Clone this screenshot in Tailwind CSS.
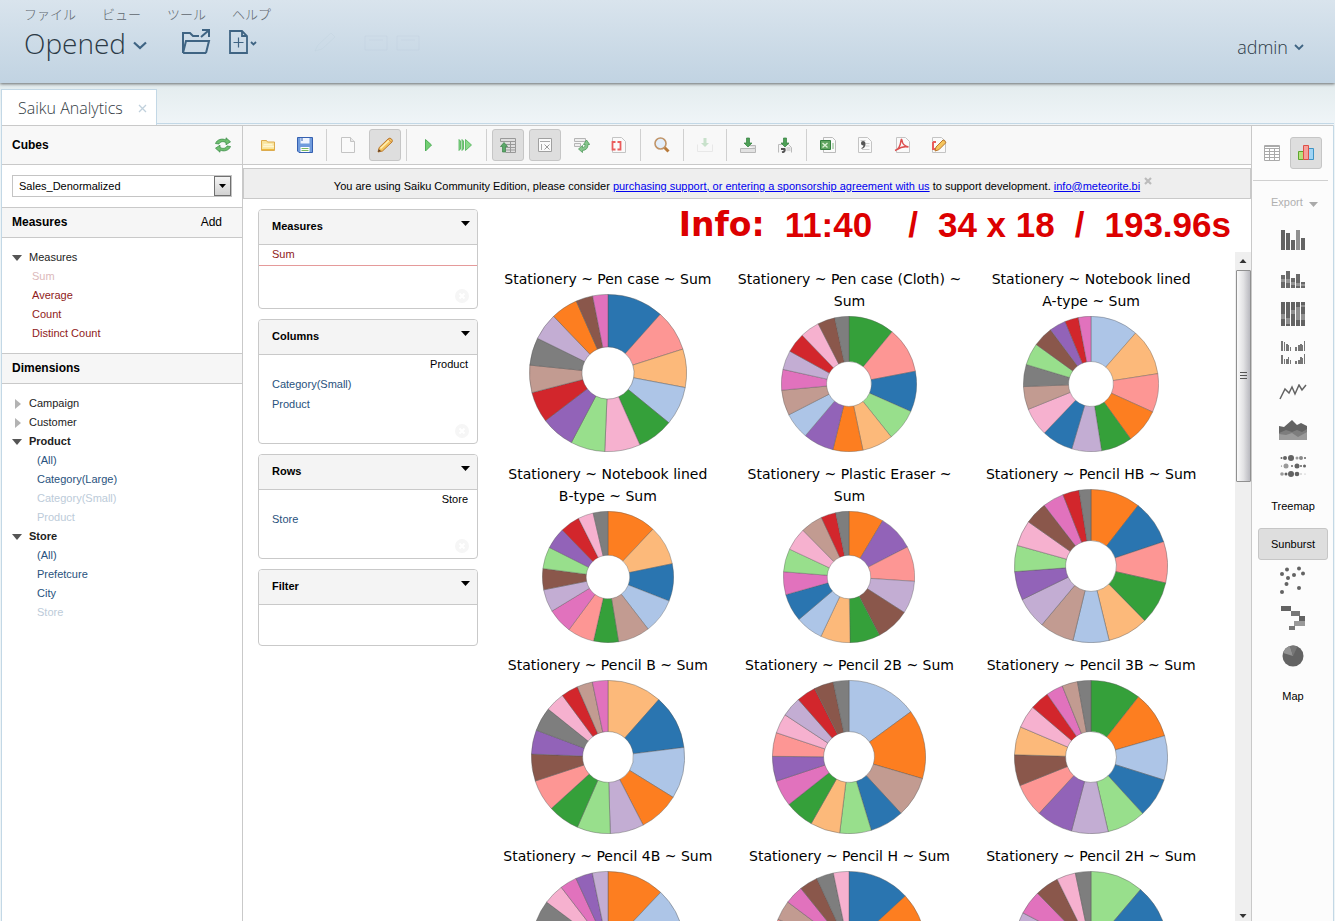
<!DOCTYPE html>
<html lang="ja">
<head>
<meta charset="utf-8">
<title>Saiku Analytics</title>
<script src="https://cdn.jsdelivr.net/npm/@tailwindcss/browser@4"></script>
</head>
<body class="flex h-screen flex-col overflow-hidden bg-[#eef4f6] font-['Liberation_Sans',Arial,sans-serif] text-[11px] leading-[19px] text-black">

<!-- Application header -->
<header class="relative z-10 flex h-[83px] shrink-0 justify-between bg-linear-to-b from-[#d9e4ed] to-[#c1d3e2] px-6 shadow-[0_1px_3px_rgba(0,0,0,0.55)]">
  <div class="flex flex-col">
    <nav class="flex h-[26px] items-center gap-[26px] font-['Noto_Sans_CJK_JP',sans-serif] text-[13px] font-light text-[#5f676e]">
      <a href="#">ファイル</a><a href="#">ビュー</a><a href="#">ツール</a><a href="#">ヘルプ</a>
    </nav>
    <div class="flex h-[34px] items-center">
      <button class="flex items-center gap-[7px] font-['Open_Sans',sans-serif] text-[28px] leading-8 font-light text-[#2c3a46]">Opened
        <svg class="mt-1 h-[9px] w-[14px]" viewBox="0 0 14 9" fill="none" stroke="#3f6483" stroke-width="2.2"><path d="M1 1.5l6 5.500 6-5.500"/></svg>
      </button>
      <button aria-label="Open" class="mb-1 ml-[34px]"><svg class="h-[27px] w-[30px]" viewBox="0 0 30 27" fill="none" stroke="#3f6483" stroke-width="2"><path d="M2 25V5h7l3 3h6M2 25h23M2 25l3-12h23l-3 12M20 9l7-6M21 2h7v7"/></svg></button>
      <button aria-label="New" class="mb-[2px] ml-[18px]"><svg class="h-[24px] w-[28px]" viewBox="0 0 28 24" fill="none" stroke="#3f6483" stroke-width="1.800"><path d="M1 1h12l5 5v17H1zM13 1v5h5"/><path d="M9.500 7.500v10M4.500 12.500h10" stroke-width="1.200"/><path d="M22 12l2.500 2.500L27 12"/></svg></button>
      <svg class="ml-14 h-[22px] w-[110px]" viewBox="0 0 110 22" fill="none" stroke="#b9cbd9" stroke-opacity=".25"><path d="M2 19l3-6L18 1l4 4L9 17zM52 4h22v14H52zM56 8h14M84 4h22v14H84zM88 8h14"/></svg>
    </div>
  </div>
  <button class="mr-[7px] mt-[33px] flex h-7 items-center gap-[6px] font-['Open_Sans',sans-serif] text-[18px] font-light text-[#2c3a46]">admin
    <svg class="h-[7px] w-[10px]" viewBox="0 0 10 7" fill="none" stroke="#3f6483" stroke-width="1.800"><path d="M1 1l4 4 4-4"/></svg>
  </button>
</header>

<!-- Perspective tabs -->
<div class="flex h-[42px] shrink-0 items-end bg-linear-to-b from-[#e3ecee] to-[#f0f5f8] px-px">
  <div class="flex h-[36px] w-[156px] items-center justify-between border border-b-0 border-[#c3d8e6] bg-white pt-px pr-[9px] pl-4">
    <a href="#" class="font-['Open_Sans',sans-serif] text-[16px] font-light text-[#333c44]">Saiku Analytics</a>
    <button aria-label="Close tab"><svg class="size-[9px]" viewBox="0 0 9 9" stroke="#c0d0dc" stroke-width="1.300"><path d="M1 1l7 7M8 1l-7 7"/></svg></button>
  </div>
  <div class="mb-px h-px flex-1 bg-[#c3d8e6]"></div>
</div>

<div class="mx-px flex min-h-0 flex-1 border-x border-[#c3d8e6] bg-white">
  <!-- Cube browser -->
  <aside class="w-[241px] shrink-0 border-t border-r border-[#c9c9c9]">
    <div class="flex h-[39px] items-center justify-between border-b border-[#c9c9c9] bg-[#f8f8f8] px-[10px]">
      <h2 class="text-[12px] font-bold">Cubes</h2>
      <button aria-label="Refresh cubes"><svg class="h-[16px] w-[18px]" viewBox="0 0 18 16" fill="#6fbf6f" stroke="#3f8f4b" stroke-width=".8"><path d="M1.500 6.500C3 2.500 8 1 12 3V.8l4.500 4-4.500 3V5.500C9 4 6 4.500 5 7z"/><path d="M16.500 9.500C15 13.500 10 15 6 13v2.200l-4.500-4 4.500-3v2.300c3 1.500 6 1 7-1.500z"/></svg></button>
    </div>
    <div class="p-[10px]">
      <div class="relative">
        <select aria-label="Cube" class="block h-[22px] w-full appearance-none border border-[#c4c4c4] bg-white pl-[6px] text-[11px]"><option>Sales_Denormalized</option></select>
        <span class="pointer-events-none absolute top-px right-px flex h-5 w-[17px] items-center justify-center border border-[#707070] bg-linear-to-b from-[#f4f4f4] to-[#d2d2d2]"><svg class="h-1 w-[7px]" viewBox="0 0 7 4"><path d="M0 0h7L3.500 4z"/></svg></span>
      </div>
    </div>
    <div class="flex h-[31px] items-center justify-between border-y border-[#c9c9c9] bg-[#f6f6f6] pl-[10px] pr-5">
      <h2 class="text-[12px] font-bold">Measures</h2><button class="text-[12px]">Add</button>
    </div>
    <ul class="h-[115px] pt-[10px] text-[#8f1a20]">
      <li class="flex items-center gap-[7px] pl-[10px] text-[#222]"><svg class="h-[6px] w-[10px]" viewBox="0 0 10 6"><path fill="#555" d="M0 0h10L5 6z"/></svg>Measures</li>
      <li class="pl-[30px] text-[#dcb9bb]">Sum</li>
      <li class="pl-[30px]">Average</li>
      <li class="pl-[30px]">Count</li>
      <li class="pl-[30px]">Distinct Count</li>
    </ul>
    <div class="flex h-[31px] items-center border-y border-[#c9c9c9] bg-[#f6f6f6] pl-[10px]"><h2 class="text-[12px] font-bold">Dimensions</h2></div>
    <ul class="pt-[10px] text-[#28527d]">
      <li class="flex items-center gap-[7px] pl-[10px] text-[#222]"><svg class="h-[10px] w-[10px]" viewBox="0 0 10 10"><path fill="#b3b3b3" d="M3 0l6 5-6 5z"/></svg>Campaign</li>
      <li class="flex items-center gap-[7px] pl-[10px] text-[#222]"><svg class="h-[10px] w-[10px]" viewBox="0 0 10 10"><path fill="#b3b3b3" d="M3 0l6 5-6 5z"/></svg>Customer</li>
      <li class="flex items-center gap-[7px] pl-[10px] font-bold text-[#222]"><svg class="h-[6px] w-[10px]" viewBox="0 0 10 6"><path fill="#555" d="M0 0h10L5 6z"/></svg>Product</li>
      <li class="pl-[35px]">(All)</li>
      <li class="pl-[35px]">Category(Large)</li>
      <li class="pl-[35px] text-[#bccbd9]">Category(Small)</li>
      <li class="pl-[35px] text-[#bccbd9]">Product</li>
      <li class="flex items-center gap-[7px] pl-[10px] font-bold text-[#222]"><svg class="h-[6px] w-[10px]" viewBox="0 0 10 6"><path fill="#555" d="M0 0h10L5 6z"/></svg>Store</li>
      <li class="pl-[35px]">(All)</li>
      <li class="pl-[35px]">Prefetcure</li>
      <li class="pl-[35px]">City</li>
      <li class="pl-[35px] text-[#bccbd9]">Store</li>
    </ul>
  </aside>

  <!-- Workspace -->
  <main class="flex min-w-0 flex-1 flex-col border-t border-[#c9c9c9]">
    <div class="flex h-[39px] shrink-0 items-center gap-[5px] border-b border-[#c9c9c9] bg-[#f8f8f8] pl-[9px] [&_svg]:size-4 [&>button]:flex [&>button]:size-8 [&>button]:items-center [&>button]:justify-center [&>i]:h-8 [&>i]:w-px [&>i]:bg-[#d0d0d0]">
      <button aria-label="Open query"><svg viewBox="0 0 16 16"><path d="M1.500 13.500v-10h5l1 1.500h7v8.500z" fill="#f9e49c" stroke="#dcab4e"/><path d="M3.500 7.500h9M3 9.500h11" stroke="#fff6d0" stroke-width="1.500"/><path d="M2 12.500h12" stroke="#f0b93c"/></svg></button>
      <button aria-label="Save query"><svg viewBox="0 0 16 16"><path d="M.5.5h15v15H2L.5 14z" fill="#6f9bdc" stroke="#3560b0"/><path d="M3.500 1h9v5.500h-9z" fill="#eef4ff"/><path d="M5 1v3" stroke="#3560b0"/><path d="M3.500 10h9v5h-9z" fill="#fff"/><path d="M4.500 11.500h7M4.500 13.500h7" stroke="#79b860"/></svg></button>
      <i></i>
      <button aria-label="New query"><svg viewBox="0 0 16 16"><path d="M1.500.5h9l4 4v11h-13z" fill="#fafafa" stroke="#c4c4c4"/><path d="M10.500.5v4h4" fill="#e8e8e8" stroke="#c4c4c4"/></svg></button>
      <button aria-label="Edit query" class="rounded-[3px] border border-[#c6c6c6] bg-[#dedede]"><svg viewBox="0 0 16 16"><path d="M1 15l1.200-4.500L11.500 1.500q1.500-1 3 .500t.500 3L5.500 14z" fill="#f5c55d" stroke="#b8772f"/><path d="M3.500 11.500L12 3.500" stroke="#fff0b5" stroke-width="1.500"/><path d="M1 15l.8-2.800L4 14z" fill="#5a3a22"/><path d="M11 2l3 3" stroke="#d99252"/></svg></button>
      <i></i>
      <button aria-label="Run query"><svg viewBox="0 0 16 16"><path d="M5.500 2.500l6 5.500-6 6z" fill="#72cf72" stroke="#4fae58"/></svg></button>
      <button aria-label="Automatic execution"><svg viewBox="0 0 16 16" fill="#8ada8a" stroke="#4fae58" stroke-width=".8"><path d="M2 2.500l1.500 1.500v8L2 13.500zM5 2.500L6.500 4v8L5 13.500zM8.500 2.500L14.500 8l-6 5.500z"/></svg></button>
      <i></i>
      <button aria-label="Hide parents" class="rounded-[3px] border border-[#c6c6c6] bg-[#dedede]"><svg viewBox="0 0 16 16"><path d="M.5 1.500h15v3H.5zM5.500 4.500h10v11h-10M10.500 4.500v11M5.500 7.500h10M5.500 10.500h10M5.500 13h10" fill="none" stroke="#999"/><path d="M2.500 15V9.500h-2L4 5.500l3.500 4h-2V15z" fill="#5aa868" stroke="#3a8048" stroke-width=".7"/></svg></button>
      <button aria-label="Non-empty" class="rounded-[3px] border border-[#c6c6c6] bg-[#dedede]"><svg viewBox="0 0 16 16"><path d="M1.500 1.500h13v13h-13z" fill="#fafafa" stroke="#a0a0a0"/><path d="M3 4.500h10M4.500 7v6" fill="none" stroke="#a8a8a8"/><path d="M7.500 7.500l5 5M12.500 7.500l-5 5" stroke="#999"/></svg></button>
      <button aria-label="Swap axis"><svg viewBox="0 0 16 16"><path d="M.5 1.500h11v3H.5zM.5 6.500h6v3h-6z" fill="#eee" stroke="#b5b5b5"/><path d="M4.500 12l4-3.500v2.200q2.800 0 2.800-3.200H9.500L12.500 3l3.200 4.500H14q0 5.500-5.500 6v2z" fill="#86c58c" stroke="#4f9a5a" stroke-width=".8"/></svg></button>
      <button aria-label="Show MDX"><svg viewBox="0 0 16 16"><path d="M1.500.5h9l4 4v11h-13z" fill="#fafafa" stroke="#c4c4c4"/><path d="M4.500 5h-3v7.500h3M6.500 5h3v7.500h-3" fill="none" stroke="#ea5c5c" stroke-width="1.800"/></svg></button>
      <i></i>
      <button aria-label="Explain query"><svg viewBox="0 0 16 16"><path d="M10.500 10.500l4 4" stroke="#b87a3a" stroke-width="3"/><circle cx="6.500" cy="6.500" r="5.500" fill="#e3eefa" stroke="#c09468" stroke-width="1.600"/></svg></button>
      <i></i>
      <button aria-label="Zoom in" disabled class="opacity-35"><svg viewBox="0 0 16 16"><path d="M.5 7.500v7h15v-7" fill="none" stroke="#ccc"/><path d="M6.500 1h3v5h2.500L8 10 4 6h2.500z" fill="#72b87a"/></svg></button>
      <i></i>
      <button aria-label="Drill through"><svg viewBox="0 0 16 16"><path d="M.5 11.500h15v4H.5zM6.500 8.500h9v3" fill="#e2e2e2" stroke="#b8b8b8"/><path d="M6.500 1h3v5h2.500L8 10 4 6h2.500z" fill="#4da156" stroke="#34803f" stroke-width=".7"/></svg></button>
      <button aria-label="Export drill through"><svg viewBox="0 0 16 16"><path d="M1.500 15.500v-8h10l3 3v5" fill="#f5f5f5" stroke="#bbb"/><path d="M4 12h3.500q1 2.500-2.500 3.500" fill="none" stroke="#555" stroke-width="2"/><path d="M9.500 11h4M9.500 13h4" stroke="#bbb"/><path d="M6.500 1h3v5h2.500L8 10 4 6h2.500z" fill="#4da156" stroke="#34803f" stroke-width=".7"/></svg></button>
      <i></i>
      <button aria-label="Export XLS"><svg viewBox="0 0 16 16"><path d="M3.500.5h9l3 3v12h-12z" fill="#fafafa" stroke="#bbb"/><path d="M.5 3.500h10v9H.5z" fill="#5fa55f" stroke="#34803f"/><path d="M2.500 6l5 4.500M7.500 6l-5 4.500" stroke="#d9f0d4" stroke-width="1.400"/><path d="M12 7h2M12 9h2M12 11h2" stroke="#7cb87c"/></svg></button>
      <button aria-label="Export CSV"><svg viewBox="0 0 16 16"><path d="M1.500.5h9l4 4v11h-13z" fill="#fafafa" stroke="#c4c4c4"/><path d="M8.500 6.500h4M8.500 9h4M5 12.500h7.500M3.500 3.500h5" stroke="#ccc"/><path d="M4 6q0-2 2-2 2.500 0 2.500 3 0 4-4 5v-1q2-1 2-2.500Q4 8.500 4 6z" fill="#555"/></svg></button>
      <button aria-label="Export PDF"><svg viewBox="0 0 16 16"><path d="M2.500.5h9l4 4v11h-13z" fill="#fafafa" stroke="#c4c4c4"/><path d="M1 13.500q5-1.500 6-10 .5-2.500 1 0 .5 5 6.500 6.500-6-1.500-12 3" fill="none" stroke="#dc5050" stroke-width="1.500"/></svg></button>
      <button aria-label="Query scenario"><svg viewBox="0 0 16 16"><path d="M1.500.5h9l4 4v11h-13z" fill="#fafafa" stroke="#c4c4c4"/><path d="M2 5v7h3M2 5h3" fill="none" stroke="#ea5c5c" stroke-width="2"/><path d="M4 14l1-4 7-7q2-.5 2.800 2.800l-7 7z" fill="#f5c55d" stroke="#b8772f"/></svg></button>
    </div>

    <p class="mt-[3px] flex h-[31px] shrink-0 items-center justify-center border border-[#c9c9c9] bg-[#eee] pt-[5px] pr-2">
      <span>You are using Saiku Community Edition, please consider <a href="#" class="text-[#0000ee] underline">purchasing support, or entering a sponsorship agreement with us</a> to support development. <a href="#" class="text-[#0000ee] underline">info@meteorite.bi</a></span>
      <button aria-label="Dismiss" class="mb-[10px] ml-1"><svg class="size-2" viewBox="0 0 8 8" stroke="#bbb" stroke-width="2.200"><path d="M1 1l6 6M7 1L1 7"/></svg></button>
    </p>

    <div class="flex min-h-0 flex-1">
      <!-- Query axes -->
      <div class="flex w-[244px] shrink-0 flex-col gap-[10px] pt-[10px] pl-[15px] [&_header]:flex [&_header]:h-[35px] [&_header]:justify-between [&_header]:rounded-t-[3px] [&_header]:border-b [&_header]:border-[#c9c9c9] [&_header]:bg-[#f4f4f4] [&_header]:pt-[7px] [&_header]:pr-[7px] [&_header]:pl-[13px] [&_header]:font-bold [&_header_svg]:mt-1 [&_header_svg]:h-[5px] [&_header_svg]:w-[9px] [&>section]:rounded-[4px] [&>section]:border [&>section]:border-[#c9c9c9]">
        <section class="flex h-[100px] w-[220px] flex-col">
          <header><h3>Measures</h3><svg viewBox="0 0 9 5"><path d="M0 0h9L4.500 5z"/></svg></header>
          <div class="h-[21px] border-b border-[#e59a9a] pl-[13px] text-[#8f1a20]">Sum</div>
          <button aria-label="Clear" class="mt-auto mr-2 mb-[5px] self-end"><svg class="size-[14px]" viewBox="0 0 14 14"><circle cx="7" cy="7" r="7" fill="#f6f6f6"/><path d="M4.500 4.500l5 5M9.500 4.500l-5 5" stroke="#fff" stroke-width="2"/></svg></button>
        </section>
        <section class="flex h-[125px] w-[220px] flex-col">
          <header><h3>Columns</h3><svg viewBox="0 0 9 5"><path d="M0 0h9L4.500 5z"/></svg></header>
          <div class="pr-[9px] text-right">Product</div>
          <ul class="pl-[13px] leading-5 text-[#28527d]"><li>Category(Small)</li><li>Product</li></ul>
          <button aria-label="Clear" class="mt-auto mr-2 mb-[5px] self-end"><svg class="size-[14px]" viewBox="0 0 14 14"><circle cx="7" cy="7" r="7" fill="#f6f6f6"/><path d="M4.500 4.500l5 5M9.500 4.500l-5 5" stroke="#fff" stroke-width="2"/></svg></button>
        </section>
        <section class="flex h-[105px] w-[220px] flex-col">
          <header><h3>Rows</h3><svg viewBox="0 0 9 5"><path d="M0 0h9L4.500 5z"/></svg></header>
          <div class="pr-[9px] text-right">Store</div>
          <ul class="pl-[13px] leading-5 text-[#28527d]"><li>Store</li></ul>
          <button aria-label="Clear" class="mt-auto mr-2 mb-[5px] self-end"><svg class="size-[14px]" viewBox="0 0 14 14"><circle cx="7" cy="7" r="7" fill="#f6f6f6"/><path d="M4.500 4.500l5 5M9.500 4.500l-5 5" stroke="#fff" stroke-width="2"/></svg></button>
        </section>
        <section class="h-[77px] w-[220px]">
          <header><h3>Filter</h3><svg viewBox="0 0 9 5"><path d="M0 0h9L4.500 5z"/></svg></header>
        </section>
      </div>

      <!-- Results -->
      <div class="flex min-w-0 flex-1 flex-col">
        <div class="flex h-[53px] shrink-0 items-center justify-end pr-5 pb-[2px] text-[35px] leading-[40px] font-bold whitespace-nowrap text-[#dc0000]">
          <span class="mr-5 font-['DejaVu_Sans',sans-serif] text-[33px]">Info:</span><span class="mr-9">11:40</span><span class="mr-5">/</span><span class="mr-5">34 x 18</span><span class="mr-5">/</span><span>193.96s</span>
        </div>
        <div class="flex min-h-0 flex-1">
          <div class="grid min-w-0 flex-1 auto-rows-max grid-cols-3 gap-y-[11px] overflow-hidden pt-4 pr-[23px] font-['DejaVu_Sans',Verdana,sans-serif] text-[14px] leading-[22px] [&_figcaption]:px-2 [&>figure]:flex [&>figure]:flex-col [&>figure]:items-center [&>figure]:gap-1 [&>figure]:text-center">
            <figure><figcaption>Stationery ~ Pen case ~ Sum</figcaption><svg class="size-[158px]" data-colors="B r o b G p g V R n K v O N M" data-ends="41.7 72.3 100.7 129.3 156.1 182.4 207.8 232.7 255.5 275.8 296.2 316.2 336.2 348.7 360"></svg></figure>
            <figure><figcaption>Stationery ~ Pen case (Cloth) ~ Sum</figcaption><svg class="size-[136px]" data-colors="G r B g o O V b n M v R p N K" data-ends="39.6 79.1 114 141.4 168.1 193.8 220.2 242.9 264.7 282.5 299 316.2 332.9 347.8 360"></svg></figure>
            <figure><figcaption>Stationery ~ Notebook lined <span class="whitespace-nowrap">A-type</span> ~ Sum</figcaption><svg class="size-[136px]" data-colors="b o r O G v B p n K g N V R M" data-ends="41.2 81.2 114.4 144.2 171 196.5 223.6 248 267.8 286.8 305.8 323.2 337.5 349.2 360"></svg></figure>
            <figure><figcaption>Stationery ~ Notebook lined <span class="whitespace-nowrap">B-type</span> ~ Sum</figcaption><svg class="size-[132px]" data-colors="O o B b n G r M v N g V R p K" data-ends="43.2 78.3 111.5 142.4 170.7 192.8 216.5 238.7 258.7 277.5 296.7 315.8 333.3 346.9 360"></svg></figure>
            <figure><figcaption>Stationery ~ Plastic Eraser ~ Sum</figcaption><svg class="size-[132px]" data-colors="O V r v N G o b B M g p n R K" data-ends="30.9 62.8 93.8 122.7 152.3 179.1 205.3 229.7 254.4 274.6 295.1 315.4 335.1 348.3 360"></svg></figure>
            <figure><figcaption>Stationery ~ Pencil HB ~ Sum</figcaption><svg class="size-[154px]" data-colors="O B r G o b n v V g p N M R K" data-ends="37.9 71.5 102.8 135.5 166.3 193.6 219.9 244 265.8 285.6 305.2 322.4 338.6 351 360"></svg></figure>
            <figure><figcaption>Stationery ~ Pencil B ~ Sum</figcaption><svg class="size-[154px]" data-colors="o B b O v g G r N V K p R n M" data-ends="41.5 82.8 121.8 152.7 178.3 203.6 227.8 251.7 272.2 290.5 308.7 323.5 336.4 348.2 360"></svg></figure>
            <figure><figcaption>Stationery ~ Pencil 2B ~ Sum</figcaption><svg class="size-[154px]" data-colors="b O n B g o G M V r p v R N K" data-ends="53.8 106.4 137.3 163.1 187 209.6 231.7 251.6 270.5 288.5 303.4 318.6 333.3 348.1 360"></svg></figure>
            <figure><figcaption>Stationery ~ Pencil 3B ~ Sum</figcaption><svg class="size-[154px]" data-colors="G O b B g v V r N o p R M n K" data-ends="38.3 73.9 107.5 137.6 167 194.8 222.7 248.1 271.7 293.1 310.4 325.1 338 349.8 360"></svg></figure>
            <figure><figcaption>Stationery ~ Pencil 4B ~ Sum</figcaption><svg class="size-[154px]" data-colors="O b B G o g r n R N K p M V v" data-ends="43.4 80 112 140 166 190 214 236 256 274 306.8 322.4 335.3 348.2 360"></svg></figure>
            <figure><figcaption>Stationery ~ Pencil H ~ Sum</figcaption><svg class="size-[154px]" data-colors="B O b G g o v V R r n M N K p" data-ends="47.3 84 114 142 168 192 216 238 258 292 306.9 321.1 335.2 348.2 360"></svg></figure>
            <figure><figcaption>Stationery ~ Pencil 2H ~ Sum</figcaption><svg class="size-[154px]" data-colors="g B O b G o r V R n v M N p K" data-ends="40.3 78 110 138 164 188 212 234 254 274 297.3 315.7 333.8 348.2 360"></svg></figure>
          </div>
          <!-- Scroll bar -->
          <div class="flex w-4 shrink-0 flex-col items-center bg-[#efefef]" aria-hidden="true">
            <svg class="h-[18px] w-4 shrink-0" viewBox="0 0 16 18"><path d="M4.500 11L8 7l3.500 4z" fill="#333"/></svg>
            <div class="flex h-[212px] w-[15px] shrink-0 items-center justify-center rounded-[1px] border border-[#909090] bg-linear-to-r from-[#fafafa] via-[#e2e2e4] to-[#b9b9bf]"><svg class="h-2 w-[7px]" viewBox="0 0 7 8"><path d="M0 .5h7M0 3.500h7M0 6.500h7" stroke="#555"/></svg></div>
            <svg class="mt-auto h-[10px] w-4 shrink-0" viewBox="0 0 16 10"><path d="M4.500 3h7L8 7z" fill="#333"/></svg>
          </div>
        </div>
      </div>
    </div>
  </main>

  <!-- Chart type picker -->
  <aside class="flex w-[82px] shrink-0 flex-col border-t border-l border-[#c9c9c9] bg-[#fcfcfc]">
    <div class="mr-[5px] ml-px flex h-[55px] items-start gap-[2px] border-b border-[#d0d0d0] pt-[11px] pl-[3px] [&>button]:flex [&>button]:size-8 [&>button]:shrink-0 [&>button]:items-center [&>button]:justify-center">
      <button aria-label="Table mode"><svg class="size-4" viewBox="0 0 16 16" fill="#fff" stroke="#aaa"><path d="M.5.5h15v15H.5z"/><path d="M.5 1.500h15M.5 3.500h15M.5 6.500h15M.5 9.500h15M.5 12.500h15M5.500 3.500v12M10.500 3.500v12"/></svg></button>
      <button aria-label="Chart mode" class="rounded-[3px] border border-[#c6c6c6] bg-[#dedede]"><svg class="size-4" viewBox="0 0 16 16"><path d="M.5 6.500h5v8h-5z" fill="#b8e07c" stroke="#5da62e"/><path d="M10.500 3.500h5v11h-5z" fill="#9fd4f5" stroke="#3f94c4"/><path d="M5.500.5h5v14h-5z" fill="#f6a09a" stroke="#dd5048"/></svg></button>
    </div>
    <button class="mt-3 mb-[12px] flex items-center gap-[6px] pl-[19px] text-[#b0b0b0]">Export <svg class="mt-1 h-[5px] w-[9px]" viewBox="0 0 9 5"><path d="M0 0h9L4.500 5z" fill="#aaa"/></svg></button>
    <div class="flex flex-col gap-[6px] pr-[5px] pl-[6px] [&>button]:flex [&>button]:h-8 [&>button]:items-center [&>button]:justify-center">
      <button aria-label="Bar chart"><svg class="h-5 w-[26px]" viewBox="0 0 26 20" fill="#636363"><path d="M1 0h4v20H1zM6 3h4v17H6zM11 10h4v10h-4z"/><path d="M16 0h4v20h-4z" fill="#909090"/><path d="M21 8h4v12h-4z"/></svg></button>
      <button aria-label="Stacked bar chart"><svg class="mt-[2px] h-[18px] w-[26px]" viewBox="0 0 26 18" fill="#6a6a6a"><path d="M1 5h4v13H1zM6 1h4v17H6zM11 8h4v10h-4zM16 4h4v14h-4zM21 12h4v6h-4z"/><path d="M1 9h4v3H1zM6 9h4v4H6zM11 12h4v3h-4zM16 13h4v3h-4zM21 14h4v2h-4z" fill="#969696"/></svg></button>
      <button aria-label="100% stacked bar chart"><svg class="mb-1 h-6 w-[26px]" viewBox="0 0 26 24" fill="#636363"><path d="M1 0h4v24H1zM6 0h4v24H6zM11 0h4v24h-4zM16 0h4v24h-4zM21 0h4v24h-4z"/><path d="M1 12h4v5H1zM6 16h4v6H6zM11 8h4v4h-4zM16 5h4v13h-4zM21 3h4v2h-4zM21 12h4v6h-4z" fill="#909090"/></svg></button>
      <button aria-label="Multiple bar chart"><svg class="mb-1 h-[23px] w-[26px]" viewBox="0 0 26 23" fill="#777"><path d="M1 0h2v10H1zM4 1h1v9H4zM6 3h2v7H6zM8 4h1v6H8zM10 6h1v4h-1zM15 6h2v4h-2zM18 4h2v6h-2zM20 3h2v7h-2zM22 4h1v6h-1zM24 0h1v10h-1zM1 14h2v9H1zM4 18h1v5H4zM6 18h2v5H6zM8 16h1v7H8zM10 19h1v4h-1zM15 20h2v3h-2zM18 19h2v4h-2zM20 16h2v7h-2zM22 17h1v6h-1zM24 13h1v10h-1z"/></svg></button>
      <button aria-label="Line chart"><svg class="h-4 w-7" viewBox="0 0 28 16" fill="none" stroke="#636363" stroke-width="1.500"><path d="M1 15l5-10 4 4 3-6 3 7 4-9 3 5 4-5"/></svg></button>
      <button aria-label="Area chart"><svg class="h-5 w-7" viewBox="0 0 28 20"><path d="M0 6l5 1 8-7 5 5 4-2 6 3v14H0z" fill="#636363"/><path d="M0 13l7-3 6 2 5-2 5 2 5-3v11H0z" fill="#7d7d7d"/><path d="M0 14l7 1 6-2 6 4 9-5v8H0z" fill="#9b9b9b"/></svg></button>
      <button aria-label="Heat grid"><svg class="mb-1 h-6 w-[26px]" viewBox="0 0 26 24" fill="#636363"><circle cx="1.500" cy="4" r="1"/><circle cx="5" cy="4" r="2"/><circle cx="11" cy="4" r="3"/><circle cx="17" cy="4" r="1.500" fill="#999"/><circle cx="21" cy="4" r="2" fill="#888"/><circle cx="25" cy="4" r="1"/><circle cx="1.500" cy="12" r=".6"/><circle cx="6" cy="12" r="2.500" fill="#999"/><circle cx="12" cy="12" r="1"/><circle cx="17" cy="12" r="2.500"/><circle cx="21" cy="12" r="1"/><circle cx="24.500" cy="12" r="1.500"/><circle cx="2" cy="20" r="1.800" fill="#999"/><circle cx="6" cy="20" r="1.500"/><circle cx="11" cy="20" r="3"/><circle cx="17" cy="20" r="2.300"/><circle cx="21" cy="20" r=".7" fill="#aaa"/><circle cx="25" cy="20" r=".6" fill="#aaa"/></svg></button>
      <button>Treemap</button>
      <button class="rounded-[3px] border border-[#c6c6c6] bg-[#dedede]">Sunburst</button>
      <button aria-label="Scatter chart"><svg class="mb-1 h-7 w-[26px]" viewBox="0 0 26 28" fill="#636363"><circle cx="2" cy="8" r="2"/><circle cx="7" cy="3.500" r="2"/><circle cx="8" cy="12" r="2"/><circle cx="14" cy="9" r="2"/><circle cx="19" cy="2.500" r="2"/><circle cx="23" cy="7.500" r="2"/><circle cx="6.500" cy="18" r="2"/><circle cx="19" cy="22" r="2"/><circle cx="2" cy="26" r="2"/></svg></button>
      <button aria-label="Waterfall chart"><svg class="mb-1 h-6 w-[26px]" viewBox="0 0 26 24" fill="#636363"><path d="M1 0h10v5H1z"/><path d="M11 5h9v5h-9zM9 20h6v4H9z" fill="#777"/><path d="M19 10h6v5h-6z"/><path d="M14 15h11v5H14z" fill="#999"/></svg></button>
      <button aria-label="Pie chart"><svg class="mb-1 size-[22px]" viewBox="0 0 22 22"><circle cx="11" cy="11" r="10.500" fill="#636363"/><path d="M11 11L1.200 8A10.500 10.500 0 0 1 8 1z" fill="#939393"/><path d="M11 11L8 1a10.500 10.500 0 0 1 7.500.5z" fill="#777"/></svg></button>
      <button>Map</button>
    </div>
  </aside>
</div>

<script>
// One letter per store; lower case is the lighter tint of the same hue.
const palette = {
  B: '#2a75b0', b: '#adc5e7', O: '#fd7e20', o: '#fcb97a', G: '#35a03a', g: '#98df8c',
  R: '#d2262c', r: '#fd9694', V: '#9263b8', v: '#c3add3', N: '#8a574b', n: '#c29b91',
  M: '#e172bd', p: '#f6b1cf', K: '#7e7e7e'
};
const point = (deg, r) => {
  const a = deg * Math.PI / 180;
  return (Math.sin(a) * r).toFixed(2) + ' ' + (-Math.cos(a) * r).toFixed(2);
};
document.querySelectorAll('svg[data-ends]').forEach(svg => {
  svg.setAttribute('viewBox', '-100 -100 200 200');
  const colors = svg.dataset.colors.split(' ');
  let from = 0;
  svg.innerHTML = svg.dataset.ends.split(' ').map((end, i) => {
    const to = Number(end);
    const d = `M${point(from, 33)}L${point(from, 99.5)}A99.5 99.5 0 0 1 ${point(to, 99.5)}L${point(to, 33)}A33 33 0 0 0 ${point(from, 33)}Z`;
    from = to;
    return `<path d="${d}" fill="${palette[colors[i]]}" stroke="#555" stroke-opacity=".55" stroke-width="1"/>`;
  }).join('');
});
</script>
</body>
</html>
